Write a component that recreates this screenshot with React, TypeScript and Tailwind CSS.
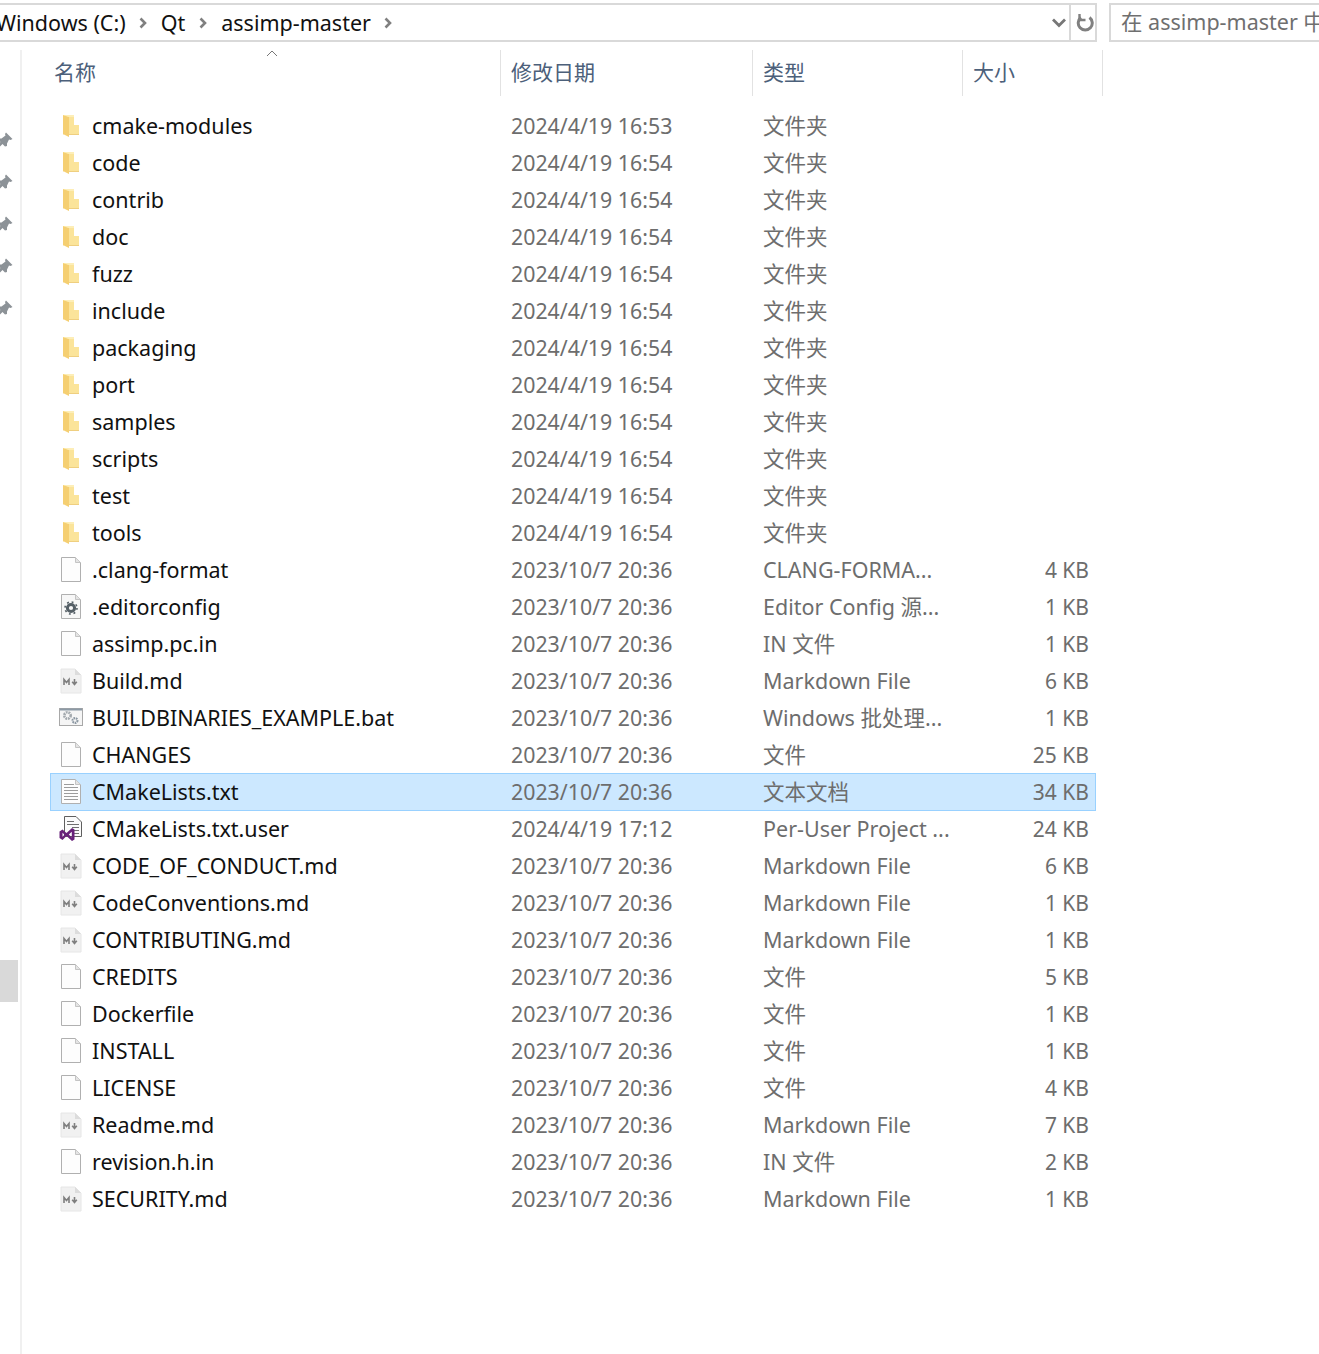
const folders = ['cmake-modules', 'code', 'contrib', 'doc', 'fuzz', 'include', 'packaging', 'port', 'samples', 'scripts', 'test', 'tools'];
const folderDates = ['2024/4/19 16:53', ...Array(11).fill('2024/4/19 16:54')];

type FileRow = { name: string; date?: string; type: string; size: string; icon: IconKind; selected?: boolean };
type IconKind = 'folder' | 'blank' | 'config' | 'md' | 'bat' | 'text' | 'vs';

const files: FileRow[] = [
  { name: '.clang-format', type: 'CLANG-FORMA...', size: '4 KB', icon: 'blank' },
  { name: '.editorconfig', type: 'Editor Config 源...', size: '1 KB', icon: 'config' },
  { name: 'assimp.pc.in', type: 'IN 文件', size: '1 KB', icon: 'blank' },
  { name: 'Build.md', type: 'Markdown File', size: '6 KB', icon: 'md' },
  { name: 'BUILDBINARIES_EXAMPLE.bat', type: 'Windows 批处理...', size: '1 KB', icon: 'bat' },
  { name: 'CHANGES', type: '文件', size: '25 KB', icon: 'blank' },
  { name: 'CMakeLists.txt', type: '文本文档', size: '34 KB', icon: 'text', selected: true },
  { name: 'CMakeLists.txt.user', date: '2024/4/19 17:12', type: 'Per-User Project ...', size: '24 KB', icon: 'vs' },
  { name: 'CODE_OF_CONDUCT.md', type: 'Markdown File', size: '6 KB', icon: 'md' },
  { name: 'CodeConventions.md', type: 'Markdown File', size: '1 KB', icon: 'md' },
  { name: 'CONTRIBUTING.md', type: 'Markdown File', size: '1 KB', icon: 'md' },
  { name: 'CREDITS', type: '文件', size: '5 KB', icon: 'blank' },
  { name: 'Dockerfile', type: '文件', size: '1 KB', icon: 'blank' },
  { name: 'INSTALL', type: '文件', size: '1 KB', icon: 'blank' },
  { name: 'LICENSE', type: '文件', size: '4 KB', icon: 'blank' },
  { name: 'Readme.md', type: 'Markdown File', size: '7 KB', icon: 'md' },
  { name: 'revision.h.in', type: 'IN 文件', size: '2 KB', icon: 'blank' },
  { name: 'SECURITY.md', type: 'Markdown File', size: '1 KB', icon: 'md' },
];

const rows: FileRow[] = [
  ...folders.map((name, i) => ({ name, date: folderDates[i], type: '文件夹', size: '', icon: 'folder' as IconKind })),
  ...files,
];

function PageShape({ fill = '#fdfdfd' }: { fill?: string }) {
  return (
    <>
      <path d="M0.5 0.5H14.5L19.5 5.5V24.5H0.5Z" fill={fill} stroke="#b0b0b0" />
      <path d="M14.5 0.5V5.5H19.5" fill="#e4e4e4" stroke="#c4c4c4" />
    </>
  );
}

function FileIcon({ kind }: { kind: IconKind }) {
  if (kind === 'folder') {
    return (
      <svg width="18" height="24" viewBox="0 0 18 24">
        <path d="M1 1H12V11H17V20H1Z" fill="#fbe49a" />
        <path d="M1 1L7 3V23L2 20.5H1Z" fill="#f5cf72" />
        <path d="M7 3L1 1H12V3Z" fill="#fdeeb8" />
        <path d="M7 20H17V21H7Z" fill="#efcf80" />
      </svg>
    );
  }
  if (kind === 'md') {
    return (
      <svg width="22" height="26" viewBox="0 0 22 26">
        <path d="M1 1H15L21 7V25H1Z" fill="#f1f1f1" stroke="#e6e6e6" />
        <path d="M15 1V7H21" fill="#dcdcdc" />
        <path d="M4 17V11.5L6.5 14.5L9 11.5V17" fill="none" stroke="#7f7f7f" strokeWidth="1.6" />
        <path d="M14.5 11V16M12.2 13.8L14.5 16.6L16.8 13.8" fill="none" stroke="#7f7f7f" strokeWidth="1.6" />
      </svg>
    );
  }
  if (kind === 'bat') {
    return (
      <svg width="24" height="20" viewBox="0 0 24 20">
        <rect x="0.5" y="0.5" width="23" height="17" fill="#f5f5f5" stroke="#a8a8a8" />
        <path d="M1 1.5H23" stroke="#8d9aa6" strokeWidth="2" />
        <circle cx="8.5" cy="7.5" r="3.2" fill="none" stroke="#a3a9ae" strokeWidth="2.6" strokeDasharray="1.8 0.8" />
        <circle cx="16" cy="12.5" r="2.4" fill="none" stroke="#8b97a2" strokeWidth="2.2" strokeDasharray="1.5 0.7" />
      </svg>
    );
  }
  if (kind === 'config') {
    return (
      <svg width="20" height="25" viewBox="0 0 20 25">
        <PageShape fill="#f7f7f7" />
        <circle cx="10" cy="14" r="3.6" fill="none" stroke="#555f66" strokeWidth="3" />
        <circle cx="10" cy="14" r="6" fill="none" stroke="#555f66" strokeWidth="1.6" strokeDasharray="1.9 2.8" />
      </svg>
    );
  }
  if (kind === 'text') {
    return (
      <svg width="20" height="25" viewBox="0 0 20 25">
        <PageShape />
        {[5, 8, 11, 14, 17, 20].map(y => (
          <path key={y} d={`M3 ${y}.5H${y < 7 ? 13 : 17}`} stroke="#9c9c9c" />
        ))}
      </svg>
    );
  }
  if (kind === 'vs') {
    return (
      <svg width="24" height="26" viewBox="0 0 24 26">
        <path d="M5.5 0.5H17L22.5 6V20.5H5.5Z" fill="#fbfbfb" stroke="#5f5f5f" />
        <path d="M8 5.5H15M8 8.5H20M13 11.5H20M13 14.5H20M14 17.5H20" stroke="#707070" />
        <path d="M0.5 15.5L3.5 13.5L7.5 17L13 12L15.5 13.5V23.5L13 25L7.5 20L3.5 24L0.5 22ZM3.5 16.8V20.8L5.5 18.8ZM12.8 15.8L9.8 18.6L12.8 21.5Z" fill="#68217a" fillRule="evenodd" />
      </svg>
    );
  }
  return (
    <svg width="20" height="25" viewBox="0 0 20 25">
      <PageShape />
    </svg>
  );
}

function PinIcon() {
  return (
    <svg width="16" height="17" viewBox="0 0 16 17" className="shrink-0">
      <path d="M9 0.5L15.5 7L13.5 8L12 7.5L10 11.5L10 14L8 14.5L5.5 12L1 16.5L2 11.5L3.5 10L1.5 8L2 6.5L4.5 6.5L8.5 3.5L8 2Z" fill="#8c9297" />
    </svg>
  );
}

function Chevron() {
  return (
    <svg width="8" height="12" viewBox="0 0 8 12" className="shrink-0">
      <path d="M1.5 1.5L6 6L1.5 10.5" fill="none" stroke="#808080" strokeWidth="2.6" />
    </svg>
  );
}

export default function App() {
  return (
    <div className="w-[1319px] h-[1354px] overflow-hidden bg-white text-[21.5px] font-['Noto_Sans','Noto_Sans_CJK_SC',sans-serif]">
      <div className="flex h-[50px] pt-[3px] pb-[8px]">
        <div className="w-[1097px] flex items-center border-y-2 border-r-2 border-[#d9d9d9] overflow-hidden">
          <div className="flex-1 flex items-center -ml-[4px] text-[#111]">
            <span className="whitespace-nowrap mt-[2px]">Windows (C:)</span>
            <span className="ml-[13px] mr-[14px]"><Chevron /></span>
            <span className="mt-[2px]">Qt</span>
            <span className="ml-[14px] mr-[14px]"><Chevron /></span>
            <span className="mt-[2px]">assimp-master</span>
            <span className="ml-[13px]"><Chevron /></span>
          </div>
          <svg width="16" height="10" viewBox="0 0 16 10" className="mr-[2px]">
            <path d="M2 1.5L8 7.5L14 1.5" fill="none" stroke="#777" strokeWidth="2.8" />
          </svg>
          <div className="w-[26px] h-full border-l-2 border-[#d9d9d9] flex items-center justify-center pl-[3px]">
            <svg width="18" height="20" viewBox="0 0 18 20">
              <path d="M5 4.5A7 7 0 1 0 13.5 4.5" fill="none" stroke="#808080" strokeWidth="3" />
              <path d="M3.5 1V7H9.5" fill="none" stroke="#808080" strokeWidth="2.4" />
            </svg>
          </div>
        </div>
        <div className="ml-[12px] flex-1 flex items-center border-y-2 border-l-2 border-[#d9d9d9] pl-[10px] text-[#6f6f6f] whitespace-nowrap overflow-hidden">
          在 assimp-master 中
        </div>
      </div>

      <div className="flex h-[1304px]">
        <div className="w-[22px] shrink-0 border-r-2 border-[#f0f0f0] flex flex-col">
          <div className="pt-[82px] flex flex-col gap-[25px] -ml-[3px]">
            {[0, 1, 2, 3, 4].map(i => (
              <PinIcon key={i} />
            ))}
          </div>
          <div className="mt-[643px] w-[18px] h-[42px] bg-[#d9d9d9]" />
        </div>

        <div className="w-[1100px]">
          <div className="relative flex h-[46px] items-center text-[21px] text-[#4c607a]">
            <div className="w-[478px] pl-[32px]">名称</div>
            <svg width="12" height="7" viewBox="0 0 12 7" className="absolute left-[244px] top-0">
              <path d="M1 6L6 1L11 6" fill="none" stroke="#777" />
            </svg>
            <div className="w-[252px] h-[46px] flex items-center border-l border-[#e2e2e2] pl-[10px]">修改日期</div>
            <div className="w-[210px] h-[46px] flex items-center border-l border-[#e2e2e2] pl-[10px]">类型</div>
            <div className="w-[141px] h-[46px] flex items-center border-x border-[#e2e2e2] pl-[10px]">大小</div>
          </div>

          <div className="pt-[11px] pl-[28px] w-[1074px]">
            {rows.map(row => (
              <div
                key={row.name}
                className={
                  row.selected
                    ? 'flex items-center h-[38px] -mb-[1px] pb-[1px] bg-[#cce8ff] shadow-[inset_0_0_0_1px_#99d1ff] whitespace-nowrap'
                    : 'flex items-center h-[37px] whitespace-nowrap'
                }
              >
                <div className="w-[42px] flex justify-center shrink-0">
                  <FileIcon kind={row.icon} />
                </div>
                <div className="w-[419px] mt-[2px] text-[#111]">{row.name}</div>
                <div className="w-[252px] text-[21.33px] text-[#6d6d6d]">{row.date ?? '2023/10/7 20:36'}</div>
                <div className="w-[210px] mt-[2px] text-[#6d6d6d]">{row.type}</div>
                <div className="w-[116px] mt-[2px] text-right text-[21px] text-[#6d6d6d]">{row.size}</div>
              </div>
            ))}
          </div>
        </div>
      </div>
    </div>
  );
}
